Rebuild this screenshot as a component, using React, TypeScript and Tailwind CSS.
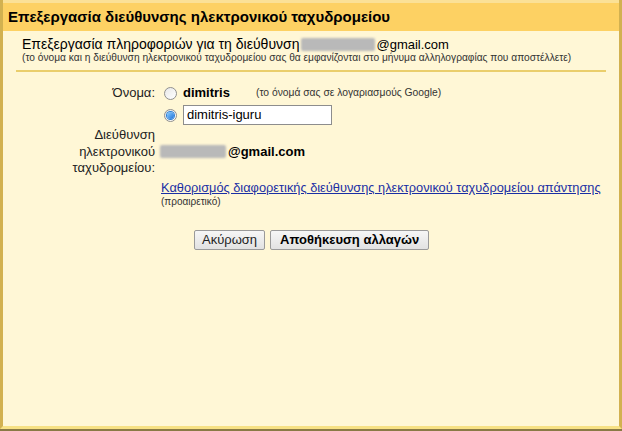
import React from "react";

function Radio({ checked }: { checked?: boolean }) {
    return (
        <span className="flex h-[13px] w-[13px] shrink-0 items-center justify-center rounded-full border border-[#8f8f8f] bg-gradient-to-br from-[#e8e8e8] to-white">
            {checked && (
                <span className="h-[7px] w-[7px] rounded-full bg-gradient-to-br from-[#8fd0ff] to-[#1870d8] shadow-[0_0_0_1px_#2a7fd6]" />
            )}
        </span>
    );
}

function HiddenAddress({ width }: { width: string }) {
    return <span className={`inline-block h-[13px] ${width} rounded-[2px] bg-[#b9b9b9] blur-[1px]`} />;
}

export default function App() {
    return (
        <div className="h-[431px] w-[622px] bg-[#8a7a45] font-['Liberation_Sans',Arial,sans-serif] text-black">
            <div className="flex h-[429px] flex-col border-x-[3px] border-b-[3px] border-x-[#d2b150] border-b-[#f7e184] bg-[#fff7d6]">
                <div className="flex h-[31px] items-center border-t-[3px] border-t-[#fbe196] bg-[#fdd163] pl-[5px] text-[15px] font-bold">
                    Επεξεργασία διεύθυνσης ηλεκτρονικού ταχυδρομείου
                </div>

                <div className="px-[13px] pt-[6px]">
                    <div className="flex items-center pl-[6px] text-[14px] leading-[15px]">
                        Επεξεργασία πληροφοριών για τη διεύθυνση
                        <span className="ml-[2px] mr-[1px] flex">
                            <HiddenAddress width="w-[74px]" />
                        </span>
                        <span className="text-[13px]">@gmail.com</span>
                    </div>
                    <div className="pl-[6px] text-[10.2px] leading-[11px] text-[#333]">
                        (το όνομα και η διεύθυνση ηλεκτρονικού ταχυδρομείου σας θα εμφανίζονται στο μήνυμα αλληλογραφίας που αποστέλλετε)
                    </div>
                    <div className="mt-[7px] h-[2px] bg-[#eace6c]" />
                </div>

                <div className="mt-[13px] grid grid-cols-[152px_1fr] gap-x-[9px] text-[13px] leading-[16px]">
                    <div className="text-right text-[#222]">Όνομα:</div>
                    <div className="flex flex-col gap-[4px]">
                        <div className="flex items-center gap-[6px]">
                            <Radio />
                            <span className="font-bold">dimitris</span>
                            <span className="ml-[20px] text-[10.3px] text-[#333]">(το όνομά σας σε λογαριασμούς Google)</span>
                        </div>
                        <div className="flex items-center gap-[6px]">
                            <Radio checked />
                            <div className="flex h-[20px] w-[149px] items-center border border-[#8d8d8d] bg-white px-[3px]">
                                dimitris-iguru
                            </div>
                        </div>
                    </div>

                    <div className="mt-[2px] text-right leading-[16.5px] text-[#222]">
                        Διεύθυνση
                        <br />
                        ηλεκτρονικού
                        <br />
                        ταχυδρομείου:
                    </div>
                    <div className="mt-[2px] -ml-[4px] flex items-center">
                        <HiddenAddress width="w-[66px]" />
                        <span className="ml-[2px] font-bold">@gmail.com</span>
                    </div>

                    <div />
                    <div className="mt-[3px] -ml-[3px]">
                        <a href="#" className="text-[12.8px] text-[#1a2fa4] underline">
                            Καθορισμός διαφορετικής διεύθυνσης ηλεκτρονικού ταχυδρομείου απάντησης
                        </a>
                        <div className="text-[10px] leading-[11px] text-[#333]">(προαιρετικό)</div>
                    </div>

                    <div />
                    <div className="mt-[23px] flex gap-[5px] pl-[30px]">
                        <button className="h-[20px] rounded-[2px] border border-[#9a9a9a] bg-gradient-to-b from-[#f6f6f6] to-[#e2e2e2] px-[7px] text-[13px] leading-[16px] text-[#222]">
                            Ακύρωση
                        </button>
                        <button className="h-[20px] rounded-[2px] border border-[#9a9a9a] bg-gradient-to-b from-[#f6f6f6] to-[#e2e2e2] px-[9px] text-[13px] font-bold leading-[16px]">
                            Αποθήκευση αλλαγών
                        </button>
                    </div>
                </div>
            </div>
        </div>
    );
}
